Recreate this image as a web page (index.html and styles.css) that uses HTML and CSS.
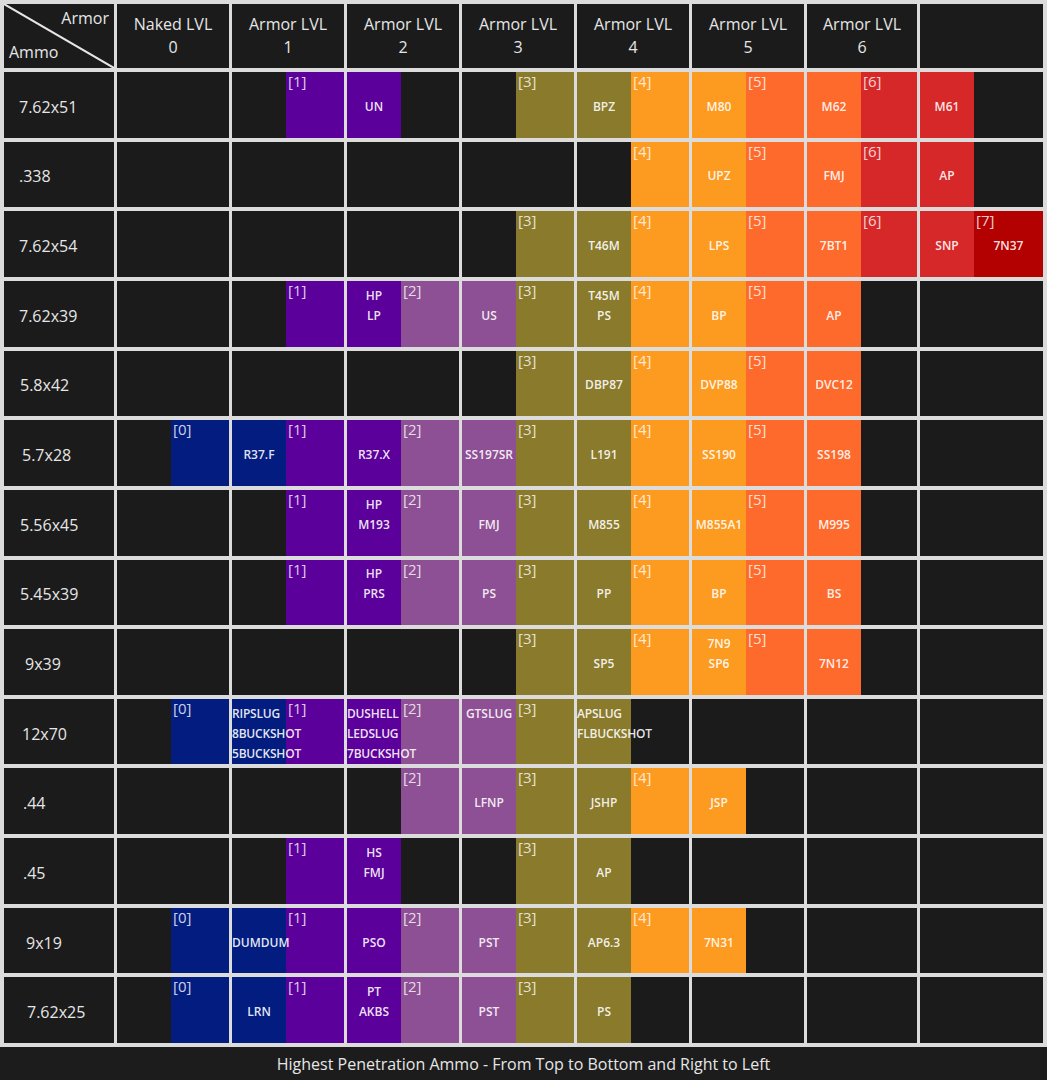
FILE: index.html
```html
<!DOCTYPE html>
<html lang="en">
<head>
<meta charset="utf-8">
<title>Ammo Penetration Chart</title>
<link rel="stylesheet" href="styles.css">
</head>
<body>
<div class="table">
  <div class="corner">
    <svg viewBox="0 0 110 64" preserveAspectRatio="none"><line x1="0" y1="0" x2="110" y2="64" stroke="#e6e6e6" stroke-width="2"/></svg>
    <span class="ar">Armor</span>
    <span class="am">Ammo</span>
  </div>
  <div class="hd"><span>Naked LVL</span><span>0</span></div>
  <div class="hd"><span>Armor LVL</span><span>1</span></div>
  <div class="hd"><span>Armor LVL</span><span>2</span></div>
  <div class="hd"><span>Armor LVL</span><span>3</span></div>
  <div class="hd"><span>Armor LVL</span><span>4</span></div>
  <div class="hd"><span>Armor LVL</span><span>5</span></div>
  <div class="hd"><span>Armor LVL</span><span>6</span></div>
  <div class="hd"></div>

  <!-- 7.62x51 -->
  <div class="rh">7.62x51</div>
  <div class="cell"></div>
  <div class="cell"><div class="l"></div><div class="r c1"><span class="lb">[1]</span></div></div>
  <div class="cell"><div class="l c1"><div class="nm n1"><div>UN</div></div></div><div class="r"></div></div>
  <div class="cell"><div class="l"></div><div class="r c3"><span class="lb">[3]</span></div></div>
  <div class="cell"><div class="l c3"><div class="nm n1"><div>BPZ</div></div></div><div class="r c4"><span class="lb">[4]</span></div></div>
  <div class="cell"><div class="l c4"><div class="nm n1"><div>M80</div></div></div><div class="r c5"><span class="lb">[5]</span></div></div>
  <div class="cell"><div class="l c5"><div class="nm n1"><div>M62</div></div></div><div class="r c6"><span class="lb">[6]</span></div></div>
  <div class="cell"><div class="l c6"><div class="nm n1"><div>M61</div></div></div><div class="r"></div></div>

  <!-- .338 -->
  <div class="rh">.338</div>
  <div class="cell"></div>
  <div class="cell"></div>
  <div class="cell"></div>
  <div class="cell"></div>
  <div class="cell"><div class="l"></div><div class="r c4"><span class="lb">[4]</span></div></div>
  <div class="cell"><div class="l c4"><div class="nm n1"><div>UPZ</div></div></div><div class="r c5"><span class="lb">[5]</span></div></div>
  <div class="cell"><div class="l c5"><div class="nm n1"><div>FMJ</div></div></div><div class="r c6"><span class="lb">[6]</span></div></div>
  <div class="cell"><div class="l c6"><div class="nm n1"><div>AP</div></div></div><div class="r"></div></div>

  <!-- 7.62x54 -->
  <div class="rh">7.62x54</div>
  <div class="cell"></div>
  <div class="cell"></div>
  <div class="cell"></div>
  <div class="cell"><div class="l"></div><div class="r c3"><span class="lb">[3]</span></div></div>
  <div class="cell"><div class="l c3"><div class="nm n1"><div>T46M</div></div></div><div class="r c4"><span class="lb">[4]</span></div></div>
  <div class="cell"><div class="l c4"><div class="nm n1"><div>LPS</div></div></div><div class="r c5"><span class="lb">[5]</span></div></div>
  <div class="cell"><div class="l c5"><div class="nm n1"><div>7BT1</div></div></div><div class="r c6"><span class="lb">[6]</span></div></div>
  <div class="cell"><div class="l c6"><div class="nm n1"><div>SNP</div></div></div><div class="r c7"><span class="lb">[7]</span><div class="nm n1"><div>7N37</div></div></div></div>

  <!-- 7.62x39 -->
  <div class="rh">7.62x39</div>
  <div class="cell"></div>
  <div class="cell"><div class="l"></div><div class="r c1"><span class="lb">[1]</span></div></div>
  <div class="cell"><div class="l c1"><div class="nm"><div>HP</div><div>LP</div></div></div><div class="r c2"><span class="lb">[2]</span></div></div>
  <div class="cell"><div class="l c2"><div class="nm n1"><div>US</div></div></div><div class="r c3"><span class="lb">[3]</span></div></div>
  <div class="cell"><div class="l c3"><div class="nm"><div>T45M</div><div>PS</div></div></div><div class="r c4"><span class="lb">[4]</span></div></div>
  <div class="cell"><div class="l c4"><div class="nm n1"><div>BP</div></div></div><div class="r c5"><span class="lb">[5]</span></div></div>
  <div class="cell"><div class="l c5"><div class="nm n1"><div>AP</div></div></div><div class="r"></div></div>
  <div class="cell"></div>

  <!-- 5.8x42 -->
  <div class="rh s1">5.8x42</div>
  <div class="cell"></div>
  <div class="cell"></div>
  <div class="cell"></div>
  <div class="cell"><div class="l"></div><div class="r c3"><span class="lb">[3]</span></div></div>
  <div class="cell"><div class="l c3"><div class="nm n1"><div>DBP87</div></div></div><div class="r c4"><span class="lb">[4]</span></div></div>
  <div class="cell"><div class="l c4"><div class="nm n1"><div>DVP88</div></div></div><div class="r c5"><span class="lb">[5]</span></div></div>
  <div class="cell"><div class="l c5"><div class="nm n1"><div>DVC12</div></div></div><div class="r"></div></div>
  <div class="cell"></div>

  <!-- 5.7x28 -->
  <div class="rh s2">5.7x28</div>
  <div class="cell"><div class="l"></div><div class="r c0"><span class="lb">[0]</span></div></div>
  <div class="cell"><div class="l c0"><div class="nm n1"><div>R37.F</div></div></div><div class="r c1"><span class="lb">[1]</span></div></div>
  <div class="cell"><div class="l c1"><div class="nm n1"><div>R37.X</div></div></div><div class="r c2"><span class="lb">[2]</span></div></div>
  <div class="cell"><div class="l c2"><div class="nm n1"><div>SS197SR</div></div></div><div class="r c3"><span class="lb">[3]</span></div></div>
  <div class="cell"><div class="l c3"><div class="nm n1"><div>L191</div></div></div><div class="r c4"><span class="lb">[4]</span></div></div>
  <div class="cell"><div class="l c4"><div class="nm n1"><div>SS190</div></div></div><div class="r c5"><span class="lb">[5]</span></div></div>
  <div class="cell"><div class="l c5"><div class="nm n1"><div>SS198</div></div></div><div class="r"></div></div>
  <div class="cell"></div>

  <!-- 5.56x45 -->
  <div class="rh s1">5.56x45</div>
  <div class="cell"></div>
  <div class="cell"><div class="l"></div><div class="r c1"><span class="lb">[1]</span></div></div>
  <div class="cell"><div class="l c1"><div class="nm"><div>HP</div><div>M193</div></div></div><div class="r c2"><span class="lb">[2]</span></div></div>
  <div class="cell"><div class="l c2"><div class="nm n1"><div>FMJ</div></div></div><div class="r c3"><span class="lb">[3]</span></div></div>
  <div class="cell"><div class="l c3"><div class="nm n1"><div>M855</div></div></div><div class="r c4"><span class="lb">[4]</span></div></div>
  <div class="cell"><div class="l c4"><div class="nm n1"><div>M855A1</div></div></div><div class="r c5"><span class="lb">[5]</span></div></div>
  <div class="cell"><div class="l c5"><div class="nm n1"><div>M995</div></div></div><div class="r"></div></div>
  <div class="cell"></div>

  <!-- 5.45x39 -->
  <div class="rh s1">5.45x39</div>
  <div class="cell"></div>
  <div class="cell"><div class="l"></div><div class="r c1"><span class="lb">[1]</span></div></div>
  <div class="cell"><div class="l c1"><div class="nm"><div>HP</div><div>PRS</div></div></div><div class="r c2"><span class="lb">[2]</span></div></div>
  <div class="cell"><div class="l c2"><div class="nm n1"><div>PS</div></div></div><div class="r c3"><span class="lb">[3]</span></div></div>
  <div class="cell"><div class="l c3"><div class="nm n1"><div>PP</div></div></div><div class="r c4"><span class="lb">[4]</span></div></div>
  <div class="cell"><div class="l c4"><div class="nm n1"><div>BP</div></div></div><div class="r c5"><span class="lb">[5]</span></div></div>
  <div class="cell"><div class="l c5"><div class="nm n1"><div>BS</div></div></div><div class="r"></div></div>
  <div class="cell"></div>

  <!-- 9x39 -->
  <div class="rh s4">9x39</div>
  <div class="cell"></div>
  <div class="cell"></div>
  <div class="cell"></div>
  <div class="cell"><div class="l"></div><div class="r c3"><span class="lb">[3]</span></div></div>
  <div class="cell"><div class="l c3"><div class="nm n1"><div>SP5</div></div></div><div class="r c4"><span class="lb">[4]</span></div></div>
  <div class="cell"><div class="l c4"><div class="nm"><div>7N9</div><div>SP6</div></div></div><div class="r c5"><span class="lb">[5]</span></div></div>
  <div class="cell"><div class="l c5"><div class="nm n1"><div>7N12</div></div></div><div class="r"></div></div>
  <div class="cell"></div>

  <!-- 12x70 -->
  <div class="rh s2">12x70</div>
  <div class="cell"><div class="l"></div><div class="r c0"><span class="lb">[0]</span></div></div>
  <div class="cell"><div class="l c0"><div class="nm lt"><div>RIPSLUG</div><div>8BUCKSHOT</div><div>5BUCKSHOT</div></div></div><div class="r c1"><span class="lb">[1]</span></div></div>
  <div class="cell"><div class="l c1"><div class="nm lt"><div>DUSHELL</div><div>LEDSLUG</div><div>7BUCKSHOT</div></div></div><div class="r c2"><span class="lb">[2]</span></div></div>
  <div class="cell"><div class="l c2"><div class="nm"><div>GTSLUG</div></div></div><div class="r c3"><span class="lb">[3]</span></div></div>
  <div class="cell"><div class="l c3"><div class="nm lt"><div>APSLUG</div><div>FLBUCKSHOT</div></div></div><div class="r"></div></div>
  <div class="cell"></div>
  <div class="cell"></div>
  <div class="cell"></div>

  <!-- .44 -->
  <div class="rh s3">.44</div>
  <div class="cell"></div>
  <div class="cell"></div>
  <div class="cell"><div class="l"></div><div class="r c2"><span class="lb">[2]</span></div></div>
  <div class="cell"><div class="l c2"><div class="nm n1"><div>LFNP</div></div></div><div class="r c3"><span class="lb">[3]</span></div></div>
  <div class="cell"><div class="l c3"><div class="nm n1"><div>JSHP</div></div></div><div class="r c4"><span class="lb">[4]</span></div></div>
  <div class="cell"><div class="l c4"><div class="nm n1"><div>JSP</div></div></div><div class="r"></div></div>
  <div class="cell"></div>
  <div class="cell"></div>

  <!-- .45 -->
  <div class="rh s3">.45</div>
  <div class="cell"></div>
  <div class="cell"><div class="l"></div><div class="r c1"><span class="lb">[1]</span></div></div>
  <div class="cell"><div class="l c1"><div class="nm"><div>HS</div><div>FMJ</div></div></div><div class="r"></div></div>
  <div class="cell"><div class="l"></div><div class="r c3"><span class="lb">[3]</span></div></div>
  <div class="cell"><div class="l c3"><div class="nm n1"><div>AP</div></div></div><div class="r"></div></div>
  <div class="cell"></div>
  <div class="cell"></div>
  <div class="cell"></div>

  <!-- 9x19 -->
  <div class="rh s5">9x19</div>
  <div class="cell"><div class="l"></div><div class="r c0"><span class="lb">[0]</span></div></div>
  <div class="cell"><div class="l c0"><div class="nm n1"><div>DUMDUM</div></div></div><div class="r c1"><span class="lb">[1]</span></div></div>
  <div class="cell"><div class="l c1"><div class="nm n1"><div>PSO</div></div></div><div class="r c2"><span class="lb">[2]</span></div></div>
  <div class="cell"><div class="l c2"><div class="nm n1"><div>PST</div></div></div><div class="r c3"><span class="lb">[3]</span></div></div>
  <div class="cell"><div class="l c3"><div class="nm n1"><div>AP6.3</div></div></div><div class="r c4"><span class="lb">[4]</span></div></div>
  <div class="cell"><div class="l c4"><div class="nm n1"><div>7N31</div></div></div><div class="r"></div></div>
  <div class="cell"></div>
  <div class="cell"></div>

  <!-- 7.62x25 -->
  <div class="rh s6">7.62x25</div>
  <div class="cell"><div class="l"></div><div class="r c0"><span class="lb">[0]</span></div></div>
  <div class="cell"><div class="l c0"><div class="nm n1"><div>LRN</div></div></div><div class="r c1"><span class="lb">[1]</span></div></div>
  <div class="cell"><div class="l c1"><div class="nm"><div>PT</div><div>AKBS</div></div></div><div class="r c2"><span class="lb">[2]</span></div></div>
  <div class="cell"><div class="l c2"><div class="nm n1"><div>PST</div></div></div><div class="r c3"><span class="lb">[3]</span></div></div>
  <div class="cell"><div class="l c3"><div class="nm n1"><div>PS</div></div></div><div class="r"></div></div>
  <div class="cell"></div>
  <div class="cell"></div>
  <div class="cell"></div>
</div>
<div class="foot">Highest Penetration Ammo - From Top to Bottom and Right to Left</div>
</body>
</html>
```

FILE: styles.css
```css
html, body {
  margin: 0;
  padding: 0;
}
body {
  width: 1047px;
  background: #1c1c1c;
  font-family: "Open Sans", "Noto Sans", "DejaVu Sans", sans-serif;
  color: #e6e6e6;
}
.table {
  display: grid;
  grid-template-columns: 110px repeat(6, 112px) 110px 1fr;
  grid-template-rows: 64px repeat(14, 1fr);
  gap: 4px 3px;
  padding: 4px;
  height: 1047px;
  box-sizing: border-box;
  background: #dcdcdc;
}
.table > div {
  background: #1b1b1b;
  min-width: 0;
  min-height: 0;
}
.hd {
  display: flex;
  flex-direction: column;
  align-items: center;
  justify-content: center;
  font-size: 16px;
  line-height: 23px;
  color: #e6e6e6;
}
.corner {
  display: grid;
  font-size: 16px;
  line-height: 22px;
}
.corner svg {
  grid-area: 1 / 1;
  width: 100%;
  height: 100%;
}
.corner .ar {
  grid-area: 1 / 1;
  justify-self: end;
  align-self: start;
  padding: 3px 5px 0 0;
}
.corner .am {
  grid-area: 1 / 1;
  justify-self: start;
  align-self: end;
  padding: 0 0 5px 5px;
}
.rh {
  display: flex;
  align-items: center;
  padding: 4px 0 0 15px;
  font-size: 16px;
  color: #e6e6e6;
  white-space: nowrap;
}
.rh.s1 { padding-left: 16px; }
.rh.s2 { padding-left: 18px; }
.rh.s3 { padding-left: 19px; }
.rh.s4 { padding-left: 21px; }
.rh.s5 { padding-left: 22px; }
.rh.s6 { padding-left: 23px; }
.cell {
  display: flex;
}
.l {
  width: 54px;
  flex: none;
  display: grid;
}
.r {
  flex: 1;
  display: grid;
  min-width: 0;
}
.l > *, .r > * {
  grid-area: 1 / 1;
}
.lb {
  justify-self: start;
  align-self: start;
  padding-left: 2px;
  font-size: 15px;
  line-height: 18px;
  color: rgba(255, 255, 255, 0.8);
}
.nm {
  position: relative;
  align-self: center;
  justify-self: stretch;
  height: 60px;
  margin-top: 4px;
  display: flex;
  flex-direction: column;
  font-size: 12px;
  font-weight: 600;
  line-height: 20px;
  color: rgba(255, 255, 255, 0.9);
  text-align: center;
  white-space: nowrap;
}
.nm.n1 {
  justify-content: center;
}
.nm.lt {
  text-align: left;
  letter-spacing: -0.2px;
}
.c0 { background: #021c80; }
.c1 { background: #5c009c; }
.c2 { background: #8e5094; }
.c3 { background: #8a7a2c; }
.c4 { background: #fd9b21; }
.c5 { background: #fd6a2c; }
.c6 { background: #d62828; }
.c7 { background: #b30000; }
.foot {
  height: 33px;
  display: flex;
  align-items: center;
  justify-content: center;
  font-size: 16px;
  color: #e6e6e6;
  background: #1c1c1c;
}
```
